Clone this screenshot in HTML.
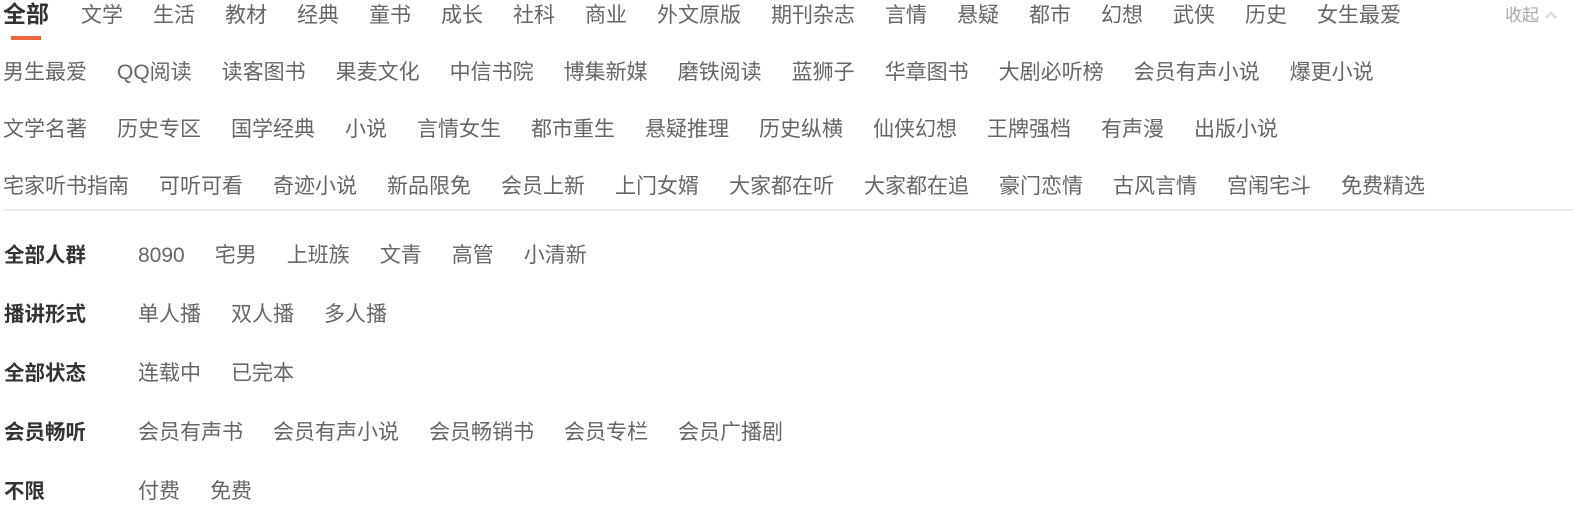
<html><head><style>
body{margin:0;width:1573px;height:509px;background:#fff;font-family:"Liberation Sans","Noto Sans CJK SC",sans-serif;color:#666;overflow:hidden;position:relative}
.row{position:absolute;left:3px;white-space:nowrap;font-size:21px;line-height:28px}
.row span{margin-right:30px}
.act{font-weight:bold;color:#333;font-size:23px;position:relative;margin-right:32px!important}
.act:after{content:"";position:absolute;left:8px;top:35px;width:30px;height:4px;background:#f0643c}
.line{position:absolute;left:3px;right:0;top:209px;height:2px;background:#eee}
.f{position:absolute;left:4px;font-size:21px;line-height:28px;white-space:nowrap}
.f b{display:inline-block;width:134px;color:#333;font-size:20.5px}
.f span{margin-right:30px}
.up{position:absolute;left:1505px;top:1px;font-size:17px;color:#a8a8b0}
</style></head><body>
<div class="row" style="top:0"><span class="act">全部</span><span>文学</span><span>生活</span><span>教材</span><span>经典</span><span>童书</span><span>成长</span><span>社科</span><span>商业</span><span>外文原版</span><span>期刊杂志</span><span>言情</span><span>悬疑</span><span>都市</span><span>幻想</span><span>武侠</span><span>历史</span><span>女生最爱</span></div>
<div class="up">收起 <svg width="14" height="10" viewBox="0 0 14 10" style="vertical-align:1px"><path d="M2 8 L7 3 L12 8" fill="none" stroke="#ddd" stroke-width="2.5"/></svg></div>
<div class="row" style="top:59px"><span>男生最爱</span><span>QQ阅读</span><span>读客图书</span><span>果麦文化</span><span>中信书院</span><span>博集新媒</span><span>磨铁阅读</span><span>蓝狮子</span><span>华章图书</span><span>大剧必听榜</span><span>会员有声小说</span><span>爆更小说</span></div>
<div class="row" style="top:116px"><span>文学名著</span><span>历史专区</span><span>国学经典</span><span>小说</span><span>言情女生</span><span>都市重生</span><span>悬疑推理</span><span>历史纵横</span><span>仙侠幻想</span><span>王牌强档</span><span>有声漫</span><span>出版小说</span></div>
<div class="row" style="top:173px"><span>宅家听书指南</span><span>可听可看</span><span>奇迹小说</span><span>新品限免</span><span>会员上新</span><span>上门女婿</span><span>大家都在听</span><span>大家都在追</span><span>豪门恋情</span><span>古风言情</span><span>宫闱宅斗</span><span>免费精选</span></div>
<div class="line"></div>
<div class="f" style="top:242px"><b>全部人群</b><span>8090</span><span>宅男</span><span>上班族</span><span>文青</span><span>高管</span><span>小清新</span></div>
<div class="f" style="top:301px"><b>播讲形式</b><span>单人播</span><span>双人播</span><span>多人播</span></div>
<div class="f" style="top:360px"><b>全部状态</b><span>连载中</span><span>已完本</span></div>
<div class="f" style="top:419px"><b>会员畅听</b><span>会员有声书</span><span>会员有声小说</span><span>会员畅销书</span><span>会员专栏</span><span>会员广播剧</span></div>
<div class="f" style="top:478px"><b>不限</b><span>付费</span><span>免费</span></div>
</body></html>
